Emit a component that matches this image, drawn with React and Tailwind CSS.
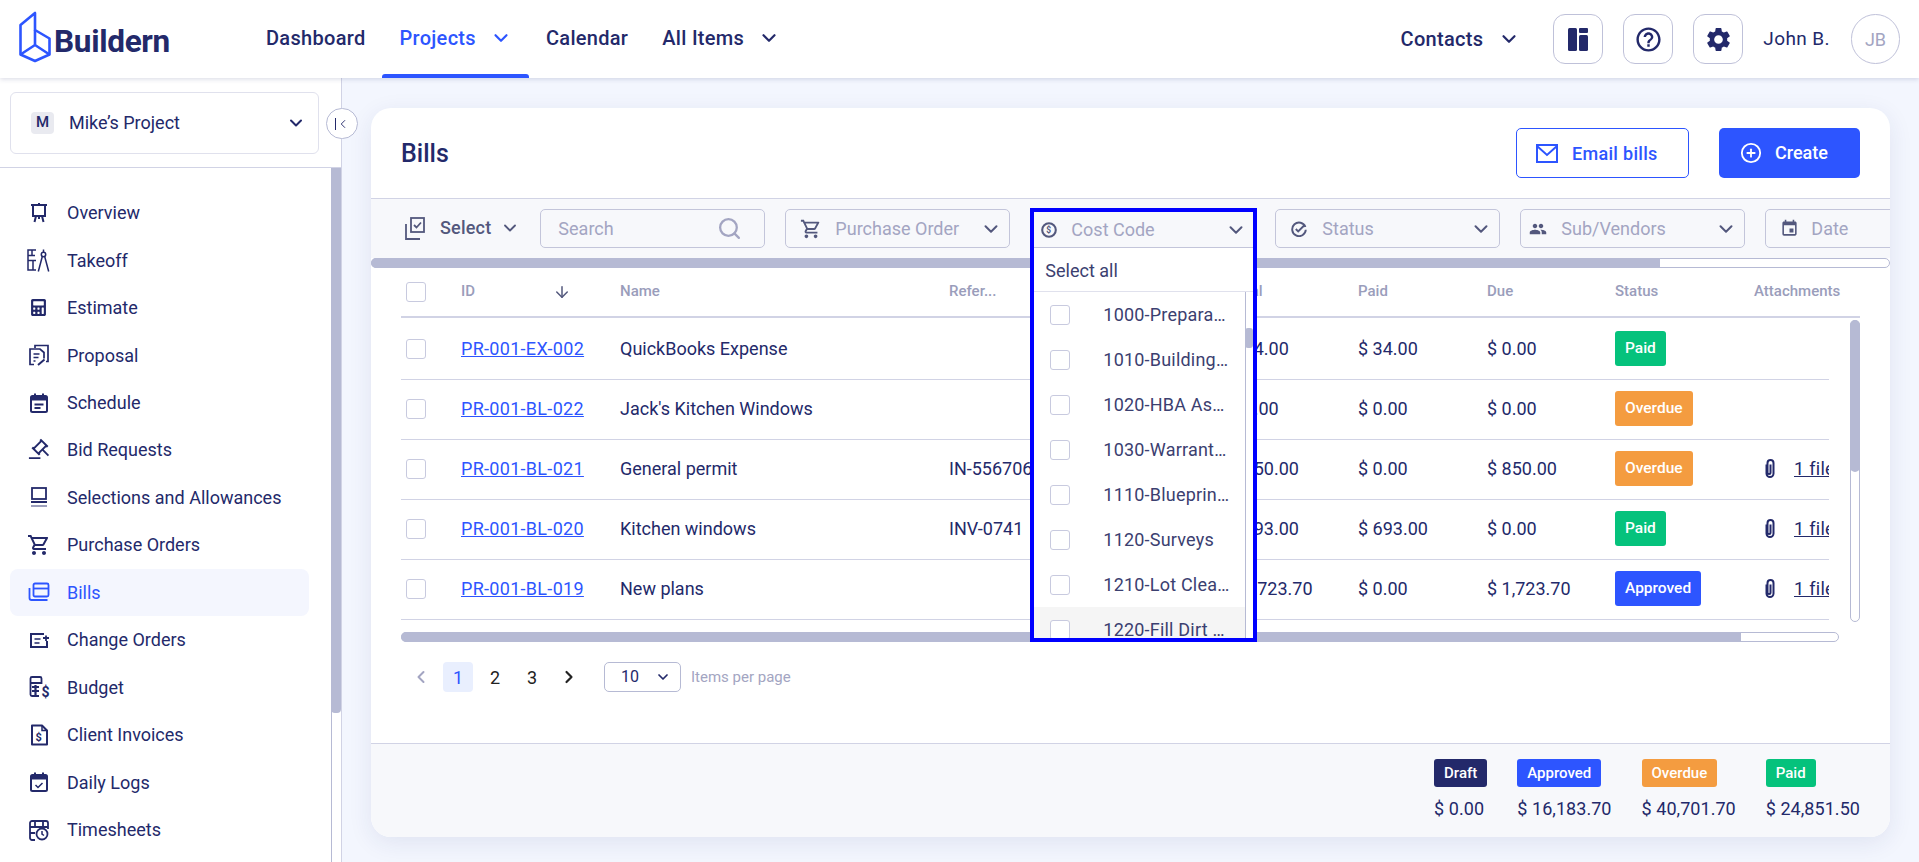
import React from "react";
import { ChevronDown, ChevronLeft, ChevronRight, ArrowDown, Search, CirclePlus } from "lucide-react";
import { MdOutlineHelpOutline, MdSettings, MdOutlineShoppingCart, MdPeople, MdEvent } from "react-icons/md";
import { FaCalculator } from "react-icons/fa";
import { RiAuctionLine } from "react-icons/ri";

const Svg = ({ children, className = "w-6 h-6" }) => (
  <svg viewBox="0 0 24 24" fill="none" stroke="currentColor" strokeWidth="2" className={className}>
    {children}
  </svg>
);

const sideItems = [
  {
    label: "Overview",
    icon: (
      <Svg>
        <path d="M4 4h16M12 2v2M6 4v11h12V4M9 15l-1.5 6M15 15l1.5 6M12 15v3" />
      </Svg>
    ),
  },
  {
    label: "Takeoff",
    icon: (
      <Svg className="w-[24px] h-[25px]">
        <path strokeWidth="1.5" d="M9 1.5H1v20h8M1 7h7M1 12h8M5 1.5V7M6 12v9.5" />
        <circle cx="16.5" cy="6" r="2.2" strokeWidth="1.5" />
        <path strokeWidth="1.5" d="M16.5 1v2.5M15.3 8l-4 15M17.7 8l4 15" />
      </Svg>
    ),
  },
  { label: "Estimate", icon: <FaCalculator className="w-[17px] h-[17px]" /> },
  {
    label: "Proposal",
    icon: (
      <Svg>
        <path strokeWidth="1.7" d="M8 5V2.5h13v16h-2M3 8.5V6h10l4 3.5v6M3 8v13.5h4" />
        <path strokeWidth="1.7" d="M6.5 11h6M6.5 14.5h5M6.5 18h2" />
        <path strokeWidth="2" d="M11 22l6.5-5.5" />
      </Svg>
    ),
  },
  {
    label: "Schedule",
    icon: (
      <Svg>
        <rect x="4" y="5" width="16" height="16" rx="1.5" />
        <path d="M4 7.5h16" strokeWidth="4" />
        <path d="M8 2.5v3M16 2.5v3M7.5 13.5h9M7.5 17h6" />
      </Svg>
    ),
  },
  { label: "Bid Requests", icon: <RiAuctionLine className="w-[23px] h-[23px]" /> },
  {
    label: "Selections and Allowances",
    icon: (
      <Svg>
        <rect x="5" y="3" width="14" height="11" strokeWidth="1.8" />
        <path d="M4 17h16" strokeWidth="2" />
        <path d="M4 21h16" strokeWidth="1.5" opacity="0.6" />
      </Svg>
    ),
  },
  { label: "Purchase Orders", icon: <MdOutlineShoppingCart className="w-[24px] h-[24px]" /> },
  {
    label: "Bills",
    active: true,
    icon: (
      <Svg>
        <rect x="6.5" y="3.5" width="15" height="13" rx="1.5" strokeWidth="1.8" />
        <path d="M6.5 8.5h15" strokeWidth="1.8" />
        <path d="M2.5 8v10a2 2 0 0 0 2 2h16" strokeWidth="1.8" />
      </Svg>
    ),
  },
  {
    label: "Change Orders",
    icon: (
      <Svg>
        <path d="M20 13v6H4V6h13" />
        <path d="M7.5 11h6M7.5 15h5" strokeWidth="1.7" />
        <path d="M16 10h6M19 7.5V13" strokeWidth="1.8" />
      </Svg>
    ),
  },
  {
    label: "Budget",
    icon: (
      <Svg>
        <path strokeWidth="1.8" d="M12 21H5a1.5 1.5 0 0 1-1.5-1.5v-16A1.5 1.5 0 0 1 5 2h8a1.5 1.5 0 0 1 1.5 1.5V8H3.5" />
        <path strokeWidth="2.2" d="M5 12h7M5 16h7M8.5 10v10" />
        <text x="14.5" y="22" fontSize="14" fontWeight="700" fill="currentColor" stroke="none" fontFamily="Roboto">$</text>
      </Svg>
    ),
  },
  {
    label: "Client Invoices",
    icon: (
      <Svg>
        <path d="M5 2.5h10l5 5v14H5z" strokeLinejoin="round" />
        <path d="M15 2.5v5h5" strokeWidth="1.5" />
        <text x="8.5" y="18" fontSize="11" fontWeight="700" fill="currentColor" stroke="none" fontFamily="Roboto">$</text>
      </Svg>
    ),
  },
  {
    label: "Daily Logs",
    icon: (
      <Svg>
        <rect x="4" y="5" width="16" height="16" rx="1.5" />
        <path d="M4 7.5h16" strokeWidth="4" />
        <path d="M8 2.5v3M16 2.5v3" />
        <path d="M8.5 15l2.5 2.5 4.5-4.5" strokeWidth="1.5" />
      </Svg>
    ),
  },
  {
    label: "Timesheets",
    icon: (
      <Svg>
        <path strokeWidth="1.8" d="M8 22H5a2 2 0 0 1-2-2V5a2 2 0 0 1 2-2h14a2 2 0 0 1 2 2v6M3 9h18M8 3v6M16 3v6M3 15h5" />
        <circle cx="15" cy="16" r="5.5" strokeWidth="1.8" />
        <path d="M15 13v3l2 1.5" strokeWidth="1.5" />
      </Svg>
    ),
  },
];

const rows = [
  { id: "PR-001-EX-002", name: "QuickBooks Expense", ref: "", total: "$ 34.00", paid: "$ 34.00", due: "$ 0.00", status: "Paid", file: false },
  { id: "PR-001-BL-022", name: "Jack's Kitchen Windows", ref: "", total: "$ 0.00", paid: "$ 0.00", due: "$ 0.00", status: "Overdue", file: false },
  { id: "PR-001-BL-021", name: "General permit", ref: "IN-556706", total: "$ 850.00", paid: "$ 0.00", due: "$ 850.00", status: "Overdue", file: true },
  { id: "PR-001-BL-020", name: "Kitchen windows", ref: "INV-0741", total: "$ 693.00", paid: "$ 693.00", due: "$ 0.00", status: "Paid", file: true },
  { id: "PR-001-BL-019", name: "New plans", ref: "", total: "$ 1,723.70", paid: "$ 0.00", due: "$ 1,723.70", status: "Approved", file: true },
];

const costCodes = [
  "1000-Preparation of Preliminary",
  "1010-Building Permits and Fees",
  "1020-HBA Assessments and Dues",
  "1030-Warranty Fund Reserve",
  "1110-Blueprints and Plans",
  "1120-Surveys",
  "1210-Lot Clearing and Grading",
  "1220-Fill Dirt and Material",
];

const badgeColors = {
  Draft: "bg-[#23296a]",
  Paid: "bg-[#05c27c]",
  Overdue: "bg-[#f49c40]",
  Approved: "bg-[#2d55ff]",
};

const Badge = ({ status, tall }) => (
  <span className={`inline-flex items-center rounded-[3px] font-medium text-white ${badgeColors[status]} ${tall ? "h-[35px] px-[10px] text-[15.5px]" : "h-[28px] px-[10px] text-[15px]"}`}>
    {status}
  </span>
);

const Checkbox = () => <span className="block w-[20px] h-[20px] shrink-0 rounded-[3px] border-[1.5px] border-[#c8cadf] bg-white" />;

const Tab = ({ label, active, chevron }) => (
  <div className={`relative h-full flex items-center px-[17px] pb-[2px] text-[20px] font-medium tracking-[0.3px] ${active ? "text-[#2d55ff]" : "text-[#23296a]"}`}>
    {label}
    {chevron && <ChevronDown className="ml-[14px] w-[22px] h-[22px]" strokeWidth={2.4} />}
    {active && <span className="absolute left-0 right-0 bottom-0 h-[4px] rounded-t-[3px] bg-[#2d55ff]" />}
  </div>
);

const IconButton = ({ children }) => (
  <button className="w-[50px] h-[50px] flex items-center justify-center rounded-[12px] border border-[#bfc1d9] text-[#23296a]">{children}</button>
);

const FilterBox = ({ icon, label, iconClass }) => (
  <div className="w-[225px] h-[39px] shrink-0 flex items-center rounded-[5px] border border-[#c3c5da] text-[#a3a5c2] text-[18px]">
    <span className={`flex items-center justify-center text-[#53587d] ${iconClass}`}>{icon}</span>
    <span className="flex-1 whitespace-nowrap">{label}</span>
    <ChevronDown className="mr-[7px] w-[22px] h-[22px] text-[#53587d]" strokeWidth={2.2} />
  </div>
);

const tableCols = "grid grid-cols-[60px_159px_329px_280px_129px_129px_128px_139px_75px] items-center";

export default function App() {
  return (
    <div className="w-full h-screen overflow-hidden flex flex-col bg-[#f3f6fe] text-[#23296a] font-[family-name:Roboto,sans-serif]">
      {/* top bar */}
      <header className="relative z-20 h-[78px] shrink-0 flex items-center bg-white shadow-[0_1px_5px_rgba(35,41,106,0.18)] pr-[19px]">
        <div className="w-[249px] h-full flex items-center pl-[20px]">
          <svg viewBox="0 0 32 52" className="w-[32px] h-[52px] text-[#2d55ff] -ml-[1px] -mt-[5px]" fill="none" stroke="currentColor" strokeWidth="2.6" strokeLinejoin="round">
            <path d="M1.5 14L16 2v17l14.5 8.5v16L16 50 1.5 43.5z" />
            <path d="M1.5 43.5L16 34l14.5 9.5M16 19v15" />
          </svg>
          <span className="ml-[3px] mt-[6px] text-[31.5px] font-bold tracking-[-0.3px] text-[#23296a]">Buildern</span>
        </div>
        <Tab label="Dashboard" />
        <Tab label="Projects" active chevron />
        <Tab label="Calendar" />
        <Tab label="All Items" chevron />
        <div className="ml-auto flex items-center">
          <span className="text-[20px] font-medium tracking-[0.3px]">Contacts</span>
          <ChevronDown className="ml-[15px] mr-[33px] w-[22px] h-[22px]" strokeWidth={2.4} />
          <div className="flex items-center gap-[20px]">
            <IconButton>
              <svg viewBox="0 0 20 23" className="w-[20px] h-[23px]" fill="currentColor">
                <rect x="0" y="0" width="9" height="23" rx="1.5" />
                <rect x="11" y="0" width="9" height="5" rx="1" />
                <rect x="11" y="7" width="9" height="16" rx="1.5" />
              </svg>
            </IconButton>
            <IconButton>
              <MdOutlineHelpOutline className="w-[29px] h-[29px]" />
            </IconButton>
            <IconButton>
              <MdSettings className="w-[29px] h-[29px]" />
            </IconButton>
          </div>
          <span className="ml-[20px] text-[19px] tracking-[0.4px]">John B.</span>
          <span className="ml-[21px] w-[49px] h-[50px] rounded-full border border-[#bfc1d9] flex items-center justify-center text-[18px] text-[#a3a5c2]">JB</span>
        </div>
      </header>

      <div className="flex-1 flex min-h-0">
        {/* sidebar */}
        <aside className="relative w-[342px] shrink-0 flex flex-col bg-white border-r border-[#d1d3e5]">
          <div className="h-[90px] shrink-0 border-b border-[#d1d3e5] pt-[14px] pl-[10px]">
            <div className="w-[309px] h-[62px] flex items-center rounded-[6px] border border-[#e0e1ed] pl-[20px] pr-[12px] pb-[1px]">
              <span className="w-[23px] h-[22px] rounded-[4px] bg-[#e9eaf0] flex items-center justify-center text-[15px] font-medium">M</span>
              <span className="ml-[15px] flex-1 text-[18px]">Mike’s Project</span>
              <ChevronDown className="w-[20px] h-[20px]" strokeWidth={2.4} />
            </div>
          </div>
          <button className="absolute z-10 left-[326px] top-[30px] w-[32px] h-[31px] rounded-full bg-white border border-[#b6bad4] flex items-center justify-center text-[#23296a]">
            <span className="w-px h-[12px] bg-[#23296a]" />
            <ChevronLeft className="w-[14px] h-[14px]" strokeWidth={1.6} />
          </button>
          <div className="flex-1 min-h-0 flex">
            <nav className="flex-1 pt-[21px] pl-[10px]">
              {sideItems.map((item) => (
                <div
                  key={item.label}
                  className={`w-[299px] h-[47.46px] flex items-center rounded-[8px] ${item.active ? "bg-[#f4f6fe] text-[#2d55ff]" : ""}`}
                >
                  <span className="w-[57px] flex justify-center">
                    <span className="flex items-center justify-center w-[24px] h-[24px]">{item.icon}</span>
                  </span>
                  <span className="text-[18px]">{item.label}</span>
                </div>
              ))}
            </nav>
            {/* sidebar scrollbar */}
            <div className="w-[10px] shrink-0 flex flex-col border-l border-[#b6bad4]">
              <div className="h-[545px] -ml-px bg-[#b6bad4] rounded-b-[4px]" />
            </div>
          </div>
        </aside>

        {/* page */}
        <main className="flex-1 min-w-0 pt-[30px] pb-[25px] pl-[29px] pr-[29px]">
          <section className="h-full rounded-[20px] bg-white shadow-[0_6px_24px_rgba(35,41,106,0.09)] overflow-hidden flex flex-col">
            <div className="h-[91px] shrink-0 flex items-center pl-[30px] pr-[30px] border-b border-[#d1d3e5]">
              <h1 className="mt-[2px] text-[25px] font-medium">Bills</h1>
              <button className="ml-auto w-[173px] h-[50px] flex items-center rounded-[5px] border border-[#2d55ff] text-[#2d55ff] text-[18px] font-medium tracking-[0.3px] pl-[19px]">
                <svg viewBox="0 0 22 19" className="w-[22px] h-[19px] mr-[14px]" fill="none" stroke="currentColor" strokeWidth="2">
                  <rect x="1" y="1" width="20" height="17" />
                  <path d="M1 2l10 9 10-9" />
                </svg>
                Email bills
              </button>
              <button className="ml-[30px] w-[141px] h-[50px] flex items-center rounded-[5px] bg-[#2d55ff] text-white text-[18px] font-medium pl-[21px] pb-[1px]">
                <CirclePlus className="w-[22px] h-[22px] mr-[13px]" strokeWidth={2} />
                Create
              </button>
            </div>

            {/* filters */}
            <div className="h-[59px] shrink-0 bg-[#f7f8fb] flex items-start pt-[10px] pl-[34px] gap-[20px]">
              <div className="flex items-center h-[39px] pb-[2px] shrink-0 text-[#53587d]">
                <svg viewBox="0 0 20 24" className="w-[20px] h-[24px]" fill="none" stroke="currentColor" strokeWidth="1.8">
                  <rect x="6" y="2" width="13" height="14" />
                  <path d="M9 9l2.5 2.5L16 6.5" />
                  <path d="M1 8v15h14" />
                </svg>
                <span className="ml-[15px] text-[18px] font-medium tracking-[0.2px]">Select</span>
                <ChevronDown className="ml-[9px] w-[20px] h-[20px]" strokeWidth={2.2} />
              </div>
              <div className="w-[225px] h-[39px] shrink-0 flex items-center rounded-[5px] border border-[#c3c5da] pl-[17px] pr-[22px] text-[18px] text-[#a3a5c2]">
                <span className="flex-1">Search</span>
                <Search className="w-[25px] h-[25px]" strokeWidth={2.2} />
              </div>
              <FilterBox label="Purchase Order" iconClass="w-[49px]" icon={<MdOutlineShoppingCart className="w-[22px] h-[22px]" />} />
              {/* cost code with its open list */}
              <div className="relative w-[225px] h-[39px] shrink-0">
                <div className="absolute z-10 left-0 -top-[1px] w-[227px] h-[434px] border-4 border-[#0000ff] bg-white overflow-hidden flex flex-col">
                  <div className="h-[36px] shrink-0 flex items-center bg-[#f7f8fb] border-b border-[#c3c5da] text-[#a3a5c2] text-[18px]">
                    <span className="w-[37px] pl-[7px] flex text-[#53587d]">
                      <svg viewBox="0 0 20 20" className="w-[16px] h-[16px]" fill="none" stroke="currentColor" strokeWidth="2.6">
                        <circle cx="10" cy="10" r="8.5" />
                        <text x="6.7" y="14" fontSize="10.5" fontWeight="700" fill="currentColor" stroke="none" fontFamily="Roboto">$</text>
                      </svg>
                    </span>
                    <span className="flex-1">Cost Code</span>
                    <ChevronDown className="mr-[6px] w-[22px] h-[22px] text-[#53587d]" strokeWidth={2.2} />
                  </div>
                  <div className="h-[44px] pt-[1px] shrink-0 flex items-center pl-[11px] border-b border-[#e0e1ed] text-[18px] text-[#3b4070]">Select all</div>
                  <div className="flex-1 min-h-0 flex">
                    <div className="flex-1 min-w-0">
                      {costCodes.map((code, i) => (
                        <div key={code} className={`h-[45px] flex items-center pl-[16px] text-[18px] text-[#3b4070] tracking-[0.2px] ${i === 7 ? "bg-[#f5f5f5]" : ""}`}>
                          <Checkbox />
                          <span className="ml-[33px] w-[127px] truncate">{code}</span>
                        </div>
                      ))}
                    </div>
                    <div className="w-[8px] shrink-0 border-l border-[#b6bad4] pt-[36px]">
                      <div className="h-[20px] -ml-px bg-[#b6bad4] rounded-[3px]" />
                    </div>
                  </div>
                </div>
              </div>
              <FilterBox label="Status" iconClass="w-[46px]" icon={
                <svg viewBox="0 0 20 20" className="w-[16px] h-[16px]" fill="none" stroke="currentColor" strokeWidth="2.4">
                  <path d="M18 7.5A8.5 8.5 0 1 0 18.5 11" />
                  <path d="M6 10l3 3 8-8" />
                </svg>
              } />
              <FilterBox label="Sub/Vendors" iconClass="w-[40px] pr-[6px]" icon={<MdPeople className="w-[18px] h-[18px]" />} />
              <div className="w-[225px] h-[39px] shrink-0 flex items-center rounded-[5px] border border-[#c3c5da] pl-[14px] text-[18px] text-[#a3a5c2]">
                <MdEvent className="w-[19px] h-[19px] mr-[12px] text-[#53587d]" />
                Date
              </div>
            </div>
            {/* filter scrollbar */}
            <div className="h-[10px] shrink-0 rounded-full border border-[#b6bad4]">
              <div className="w-[1289px] h-[10px] -m-px bg-[#b6bad4] rounded-l-full rounded-r-[4px]" />
            </div>

            {/* table */}
            <div className="ml-[30px] mr-[30px]">
              <div className={`${tableCols} h-[50px] pb-[1px] border-b-2 border-[#d1d3e5] text-[15px] font-medium text-[#9a9dbb] whitespace-nowrap`}>
                <span className="pl-[5px]"><Checkbox /></span>
                <span className="flex items-center justify-between pr-[49px]">
                  ID
                  <ArrowDown className="w-[18px] h-[18px] text-[#53587d]" strokeWidth={2} />
                </span>
                <span>Name</span>
                <span>Refer...</span>
                <span>Total</span>
                <span>Paid</span>
                <span>Due</span>
                <span>Status</span>
                <span>Attachments</span>
              </div>
              <div className="mt-[2px] h-[302px] flex justify-between">
                <div className="w-[1428px]">
                  {rows.map((row) => (
                    <div key={row.id} className={`${tableCols} h-[60px] pb-[2px] border-b border-[#d1d3e5] text-[18px] whitespace-nowrap overflow-hidden`}>
                      <span className="pl-[5px]"><Checkbox /></span>
                      <a className="text-[#2d55ff] underline tracking-[0.3px]">{row.id}</a>
                      <span>{row.name}</span>
                      <span>{row.ref}</span>
                      <span>{row.total}</span>
                      <span>{row.paid}</span>
                      <span>{row.due}</span>
                      <span><Badge status={row.status} tall /></span>
                      <span className="flex items-center pl-[9px] overflow-hidden">
                        {row.file && (
                          <>
                            <svg viewBox="0 0 14 20" className="w-[14px] h-[21px] shrink-0" fill="none" stroke="currentColor" strokeWidth="2">
                              <path d="M3.5 6v9a3.5 3.5 0 0 0 7 0V4.5a3 3 0 0 0-6 0V14a1.5 1.5 0 0 0 3 0V6" />
                            </svg>
                            <span className="ml-[17px] underline tracking-[0.3px]">1 file</span>
                          </>
                        )}
                      </span>
                    </div>
                  ))}
                </div>
                <div className="w-[10px] h-full rounded-full border border-[#b6bad4]">
                  <div className="h-[152px] -m-px bg-[#b6bad4] rounded-[5px]" />
                </div>
              </div>
              {/* table scrollbar */}
              <div className="mt-[10px] w-[1438px] h-[10px] rounded-full border border-[#b6bad4]">
                <div className="w-[1340px] h-[10px] -m-px bg-[#b6bad4] rounded-l-full rounded-r-[4px]" />
              </div>
              {/* pagination */}
              <div className="mt-[20px] h-[30px] flex items-center">
                <ChevronLeft className="ml-[10px] w-[20px] h-[20px] text-[#a3a5c2]" strokeWidth={2.4} />
                <span className="ml-[12px] w-[30px] h-[30px] flex items-center justify-center rounded-[4px] bg-[#e9effe] text-[#2d55ff] text-[18px]">1</span>
                <span className="w-[44px] text-center text-[18px] text-[#222]">2</span>
                <span className="w-[30px] text-center text-[18px] text-[#222]">3</span>
                <ChevronRight className="ml-[12px] w-[20px] h-[20px] text-[#222]" strokeWidth={2.6} />
                <div className="ml-[25px] w-[77px] h-[30px] flex items-center rounded-[5px] border border-[#b6bad4] pl-[16px] text-[16px]">
                  <span className="flex-1">10</span>
                  <ChevronDown className="mr-[9px] w-[16px] h-[16px]" strokeWidth={2.6} />
                </div>
                <span className="ml-[10px] text-[15px] text-[#a3a5c2]">Items per page</span>
              </div>
            </div>

            {/* totals */}
            <div className="mt-auto h-[94px] shrink-0 bg-[#f7f8fb] border-t border-[#d1d3e5] flex justify-end gap-[30px] pt-[15px] pr-[30px] text-[18px]">
              {[
                ["Draft", "$ 0.00"],
                ["Approved", "$ 16,183.70"],
                ["Overdue", "$ 40,701.70"],
                ["Paid", "$ 24,851.50"],
              ].map(([status, value]) => (
                <div key={status} className="flex flex-col items-start">
                  <Badge status={status} />
                  <span className="mt-[8px] tracking-[0.05px]">{value}</span>
                </div>
              ))}
            </div>
          </section>
        </main>
      </div>
    </div>
  );
}
